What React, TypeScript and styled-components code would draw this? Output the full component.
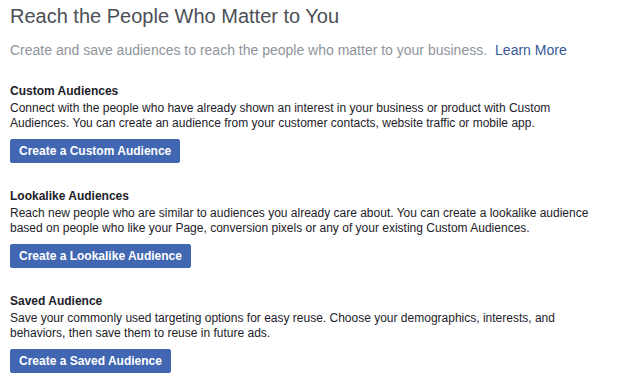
import React from 'react';
import styled, { createGlobalStyle } from 'styled-components';

const GlobalStyle = createGlobalStyle`
  html, body {
    margin: 0;
    padding: 0;
    background: #ffffff;
  }
  body {
    font-family: "Liberation Sans", Arial, Helvetica, sans-serif;
    -webkit-font-smoothing: antialiased;
  }
`;

const Page = styled.div`
  display: flex;
  flex-direction: column;
  padding: 4px 10px 0 10px;
  width: 619px;
  box-sizing: border-box;
`;

const Title = styled.h1`
  margin: 0;
  font-size: 20px;
  font-weight: normal;
  line-height: 24px;
  color: #4b4f56;
`;

const Intro = styled.p`
  margin: 13px 0 0 0;
  font-size: 14px;
  line-height: 18px;
  color: #90949c;
`;

const LearnMore = styled.a`
  color: #365899;
  text-decoration: none;
  margin-left: 8px;
  cursor: pointer;
`;

const SectionList = styled.div`
  display: flex;
  flex-direction: column;
  gap: 26px;
  margin-top: 25px;
`;

const Section = styled.section`
  display: flex;
  flex-direction: column;
  align-items: flex-start;
`;

const Heading = styled.h3`
  margin: 0 0 2px 0;
  font-size: 12px;
  font-weight: bold;
  line-height: 15px;
  color: #1d2129;
`;

const Body = styled.p`
  margin: 0;
  font-size: 12px;
  line-height: 15px;
  color: #1d2129;
`;

const Button = styled.button`
  margin-top: 8px;
  height: 24px;
  padding: 0 8px;
  border: 1px solid #4267b2;
  border-radius: 2px;
  background: #4267b2;
  color: #ffffff;
  font-family: inherit;
  font-size: 12px;
  font-weight: bold;
  line-height: 22px;
  cursor: pointer;
`;

const sections = [
  {
    title: 'Custom Audiences',
    text: 'Connect with the people who have already shown an interest in your business or product with Custom Audiences. You can create an audience from your customer contacts, website traffic or mobile app.',
    action: 'Create a Custom Audience',
  },
  {
    title: 'Lookalike Audiences',
    text: 'Reach new people who are similar to audiences you already care about. You can create a lookalike audience based on people who like your Page, conversion pixels or any of your existing Custom Audiences.',
    action: 'Create a Lookalike Audience',
  },
  {
    title: 'Saved Audience',
    text: 'Save your commonly used targeting options for easy reuse. Choose your demographics, interests, and behaviors, then save them to reuse in future ads.',
    action: 'Create a Saved Audience',
  },
];

const App = () => (
  <>
    <GlobalStyle />
    <Page>
      <Title>Reach the People Who Matter to You</Title>
      <Intro>
        Create and save audiences to reach the people who matter to your business.
        <LearnMore>Learn More</LearnMore>
      </Intro>
      <SectionList>
        {sections.map((s) => (
          <Section key={s.title}>
            <Heading>{s.title}</Heading>
            <Body>{s.text}</Body>
            <Button>{s.action}</Button>
          </Section>
        ))}
      </SectionList>
    </Page>
  </>
);

export default App;
